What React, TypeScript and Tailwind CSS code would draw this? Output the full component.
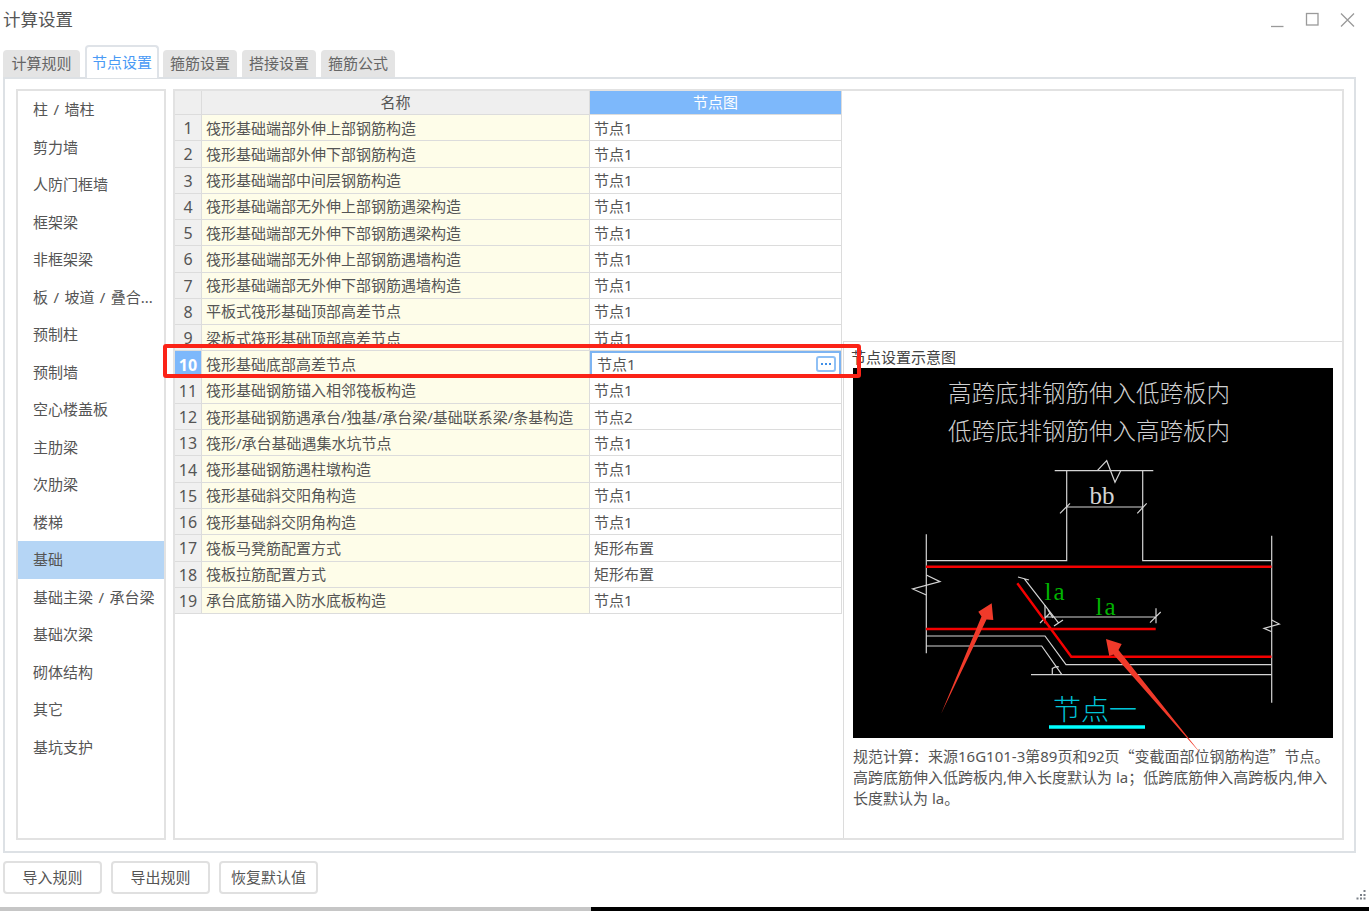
const TABS = ["计算规则", "节点设置", "箍筋设置", "搭接设置", "箍筋公式"];

const CATEGORIES = [
  "柱 / 墙柱",
  "剪力墙",
  "人防门框墙",
  "框架梁",
  "非框架梁",
  "板 / 坡道 / 叠合...",
  "预制柱",
  "预制墙",
  "空心楼盖板",
  "主肋梁",
  "次肋梁",
  "楼梯",
  "基础",
  "基础主梁 / 承台梁",
  "基础次梁",
  "砌体结构",
  "其它",
  "基坑支护",
];

const ROWS: [string, string][] = [
  ["筏形基础端部外伸上部钢筋构造", "节点1"],
  ["筏形基础端部外伸下部钢筋构造", "节点1"],
  ["筏形基础端部中间层钢筋构造", "节点1"],
  ["筏形基础端部无外伸上部钢筋遇梁构造", "节点1"],
  ["筏形基础端部无外伸下部钢筋遇梁构造", "节点1"],
  ["筏形基础端部无外伸上部钢筋遇墙构造", "节点1"],
  ["筏形基础端部无外伸下部钢筋遇墙构造", "节点1"],
  ["平板式筏形基础顶部高差节点", "节点1"],
  ["梁板式筏形基础顶部高差节点", "节点1"],
  ["筏形基础底部高差节点", "节点1"],
  ["筏形基础钢筋锚入相邻筏板构造", "节点1"],
  ["筏形基础钢筋遇承台/独基/承台梁/基础联系梁/条基构造", "节点2"],
  ["筏形/承台基础遇集水坑节点", "节点1"],
  ["筏形基础钢筋遇柱墩构造", "节点1"],
  ["筏形基础斜交阳角构造", "节点1"],
  ["筏形基础斜交阴角构造", "节点1"],
  ["筏板马凳筋配置方式", "矩形布置"],
  ["筏板拉筋配置方式", "矩形布置"],
  ["承台底筋锚入防水底板构造", "节点1"],
];

function WindowControls() {
  return (
    <svg width="90" height="20" viewBox="0 0 90 20" fill="none" stroke="#9a9a9a" strokeWidth="1.3">
      <path d="M0 16.5H12.5" />
      <rect x="35.5" y="3.5" width="11.5" height="11.5" />
      <path d="M70 3.5L83 16.5M83 3.5L70 16.5" />
    </svg>
  );
}

function NodeDiagram() {
  return (
    <svg
      className="relative z-10 block h-[370px] w-[480px] overflow-visible"
      viewBox="853 368 480 370"
      fill="none"
    >
      <rect x="853" y="368" width="480" height="370" fill="#000" />
      <g fill="#d0d0d0" fontFamily="'Noto Sans CJK SC', sans-serif" fontSize="23.5" textAnchor="middle" fontWeight="300">
        <text x="1089" y="402">高跨底排钢筋伸入低跨板内</text>
        <text x="1089" y="440">低跨底排钢筋伸入高跨板内</text>
      </g>
      <g stroke="#d4d4d4" strokeWidth="1.2">
        <path d="M1054.7 470.7H1153.3M1066.7 470.7V560.7H926.3M1142.7 470.7V560.7H1271.7" />
        <path d="M1097.3 470.7L1106.7 460.7L1115 482.3L1120.7 470.7" />
        <path d="M1066.7 507H1142.7M1060 513.3L1070 503.3M1137.3 513.3L1146.7 503.3" />
        <path d="M926.3 534.3V653.3M1271.7 535.7V702.7" />
        <path d="M926.3 575L940 581.7L912.7 589L926.3 595" />
        <path d="M1271.7 620L1279.3 624L1264 628.3L1271.7 631.7" />
        <path d="M1024 578.3L1058.3 622.7M1018 577L1029 580M1054 626L1063 620" />
        <path d="M1045 617H1156M1045 605V623.3M1156 608.3V623.3M1150 622.7L1160.7 612M1040 623L1050 613" />
        <path d="M1048 610L1053 618" />
        <path d="M926.3 636H1045L1066 664.7H1271.7M926.3 646H1041.7L1061.7 674.3" />
        <path d="M1031 674.7H1271.7M1052.3 674.7V668.5Q1056 666 1059 667" />
      </g>
      <g stroke="#f40000" strokeWidth="2.4">
        <path d="M926 566.7H1271.5M926 629H1155.7" />
        <path d="M1017.3 583.3L1071.3 656.7H1271.5" />
      </g>
      <g fontFamily="'Liberation Serif', serif" fontSize="25">
        <text x="1089.5" y="504" fill="#d4d4d4">bb</text>
        <text x="1044.5" y="600" fill="#00b400" letterSpacing="2">la</text>
        <text x="1095.5" y="615" fill="#00b400" letterSpacing="2">la</text>
      </g>
      <text x="1053" y="720" fill="#00c4d8" fontFamily="'Noto Sans CJK SC', sans-serif" fontSize="28" fontWeight="300">
        节点一
      </text>
      <path d="M1049 727H1145" stroke="#00ffff" strokeWidth="3.5" />
      <polygon
        fill="#f03a2a"
        points="991.7,603.3 993.3,620 986.5,619.5 941,714 981.5,616.5 978.3,611.7"
      />
      <polygon
        fill="#f03a2a"
        points="1106,639 1121.7,644 1118.5,650 1202,755 1113.5,654.5 1109.3,656"
      />
    </svg>
  );
}

function ResizeGrip() {
  return (
    <svg className="absolute bottom-[7px] right-[3px]" width="10" height="10" viewBox="0 0 10 10" fill="#7a8088">
      <rect x="7.5" y="0" width="2" height="2" />
      <rect x="4" y="4" width="2" height="2" />
      <rect x="7.5" y="4" width="2" height="2" />
      <rect x="0.5" y="7.5" width="2" height="2" />
      <rect x="4" y="7.5" width="2" height="2" />
      <rect x="7.5" y="7.5" width="2" height="2" />
    </svg>
  );
}

function Row({ index, name, node }: { index: number; name: string; node: string }) {
  const active = index === 10;
  return (
    <div className="flex h-[26.28px] items-stretch text-[15px] leading-none text-[#555]">
      <div
        className={`flex w-[27px] items-center justify-center border-b border-r border-[#dcdcdc] pt-[1px] text-[16px] ${
          active ? "bg-[#7db8fb] font-bold text-white" : "bg-[#f0f0f0]"
        }`}
      >
        {index}
      </div>
      <div className="flex w-[388px] items-center whitespace-nowrap border-b border-r border-[#dcdcdc] bg-[#fefde9] pl-[4px] pt-[1px]">
        {name}
      </div>
      <div className="flex w-[252px] items-center border-b border-r border-[#dcdcdc] bg-white">
        {active ? (
          <div className="flex h-full w-[251px] items-center justify-between border-2 border-[#7db4f2] pl-[5px] pr-[3px]">
            <span className="pt-[1px]">{node}</span>
            <span className="flex h-[16px] w-[20px] items-center justify-center gap-[2px] rounded-[3px] border-2 border-[#8fc0f5]">
              <i className="h-[2px] w-[2px] bg-[#3f8fe8]" />
              <i className="h-[2px] w-[2px] bg-[#3f8fe8]" />
              <i className="h-[2px] w-[2px] bg-[#3f8fe8]" />
            </span>
          </div>
        ) : (
          <span className="pl-[4px] pt-[1px]">{node}</span>
        )}
      </div>
    </div>
  );
}

function FooterButton({ label }: { label: string }) {
  return (
    <button className="flex h-[33px] w-[99px] items-center justify-center rounded-[4px] border-2 border-[#e0e0e0] bg-white text-[15px] text-[#555]">
      {label}
    </button>
  );
}

export default function App() {
  return (
    <div className="relative flex h-[911px] w-[1369px] flex-col overflow-hidden bg-white font-['Noto_Sans','Noto_Sans_CJK_SC',sans-serif] text-[#555]">
      <div className="flex h-[40px] shrink-0 items-center justify-between pl-[3px] pr-[8px]">
        <span className="text-[17.5px] leading-none text-[#555]">计算设置</span>
        <WindowControls />
      </div>

      <div className="relative z-10 flex h-[37px] shrink-0 items-end pl-[3px]">
        {TABS.map((tab, i) =>
          i === 1 ? (
            <div
              key={tab}
              className="-mb-[1px] mr-[4px] flex h-[33px] w-[74px] items-center justify-center rounded-t-[4px] border-2 border-b-0 border-[#dfe3e8] bg-white text-[15px] text-[#4a9af5]"
            >
              {tab}
            </div>
          ) : (
            <div
              key={tab}
              className={`flex h-[27px] items-center justify-center rounded-t-[4px] bg-[#e4e4e4] text-[15px] text-[#666] ${
                i === 0 ? "mr-[5px] w-[77px]" : "mr-[5px] w-[74px]"
              }`}
            >
              {tab}
            </div>
          ),
        )}
      </div>

      <div className="ml-[3px] flex h-[776px] w-[1353px] shrink-0 gap-[7px] self-start border-2 border-[#dde1e5] pb-[11px] pl-[11px] pr-[10px] pt-[10px]">
        <div className="w-[150px] shrink-0 border-2 border-[#e2e2e2]">
          {CATEGORIES.map((c) => (
            <div
              key={c}
              className={`flex h-[37.5px] items-center whitespace-nowrap pl-[15px] text-[15px] leading-none [word-spacing:1.5px] ${
                c === "基础" ? "bg-[#b5d5f5]" : ""
              }`}
            >
              {c}
            </div>
          ))}
        </div>

        <div className="flex min-w-0 flex-1 border-2 border-[#e2e2e2]">
          <div className="w-[668px] shrink-0">
            <div className="flex h-[24px] text-[15px] leading-none">
              <div className="w-[27px] border-b border-r border-[#dcdcdc] bg-[#efefef]" />
              <div className="flex w-[388px] items-center justify-center border-b border-r border-[#dcdcdc] bg-[#efefef]">
                名称
              </div>
              <div className="flex w-[252px] items-center justify-center border-b border-r border-[#dcdcdc] bg-[#7db8fb] text-white">
                节点图
              </div>
            </div>
            {ROWS.map(([name, node], i) => (
              <Row key={name} index={i + 1} name={name} node={node} />
            ))}
          </div>

          <div className="flex min-w-0 flex-1 flex-col">
            <div className="h-[251px] shrink-0 border-b border-[#dcdcdc]" />
            <div className="flex-1 border-l border-[#dcdcdc] pl-[9px]">
              <div className="-ml-[2px] flex h-[26px] items-end text-[15px] leading-none text-[#444]">
                <span className="pb-[3px]">节点设置示意图</span>
              </div>
              <NodeDiagram />
              <p className="mt-[7px] whitespace-nowrap text-[15px] leading-[21px] text-[#555]">
                规范计算：来源16G101-3第89页和92页<span className="font-['Noto_Sans_CJK_SC',sans-serif]">“</span>变截面部位钢筋构造<span className="font-['Noto_Sans_CJK_SC',sans-serif]">”</span>节点。
                <br />
                高跨底筋伸入低跨板内,伸入长度默认为 la；低跨底筋伸入高跨板内,伸入
                <br />
                长度默认为 la。
              </p>
            </div>
          </div>
        </div>
      </div>

      <div className="relative flex h-[54px] shrink-0 gap-[9px] pl-[3px] pt-[8px]">
        <FooterButton label="导入规则" />
        <FooterButton label="导出规则" />
        <FooterButton label="恢复默认值" />
        <ResizeGrip />
      </div>

      <div className="flex h-[4px] shrink-0">
        <div className="w-[591px] bg-[#c6c6c6]" />
        <div className="flex-1 bg-black" />
      </div>

      {/* annotation drawn over the selected row */}
      <div className="pointer-events-none absolute left-[163px] top-[344px] z-20 h-[34px] w-[698px] rounded-[3px] border-[4px] border-[#fb2317]" />
    </div>
  );
}
